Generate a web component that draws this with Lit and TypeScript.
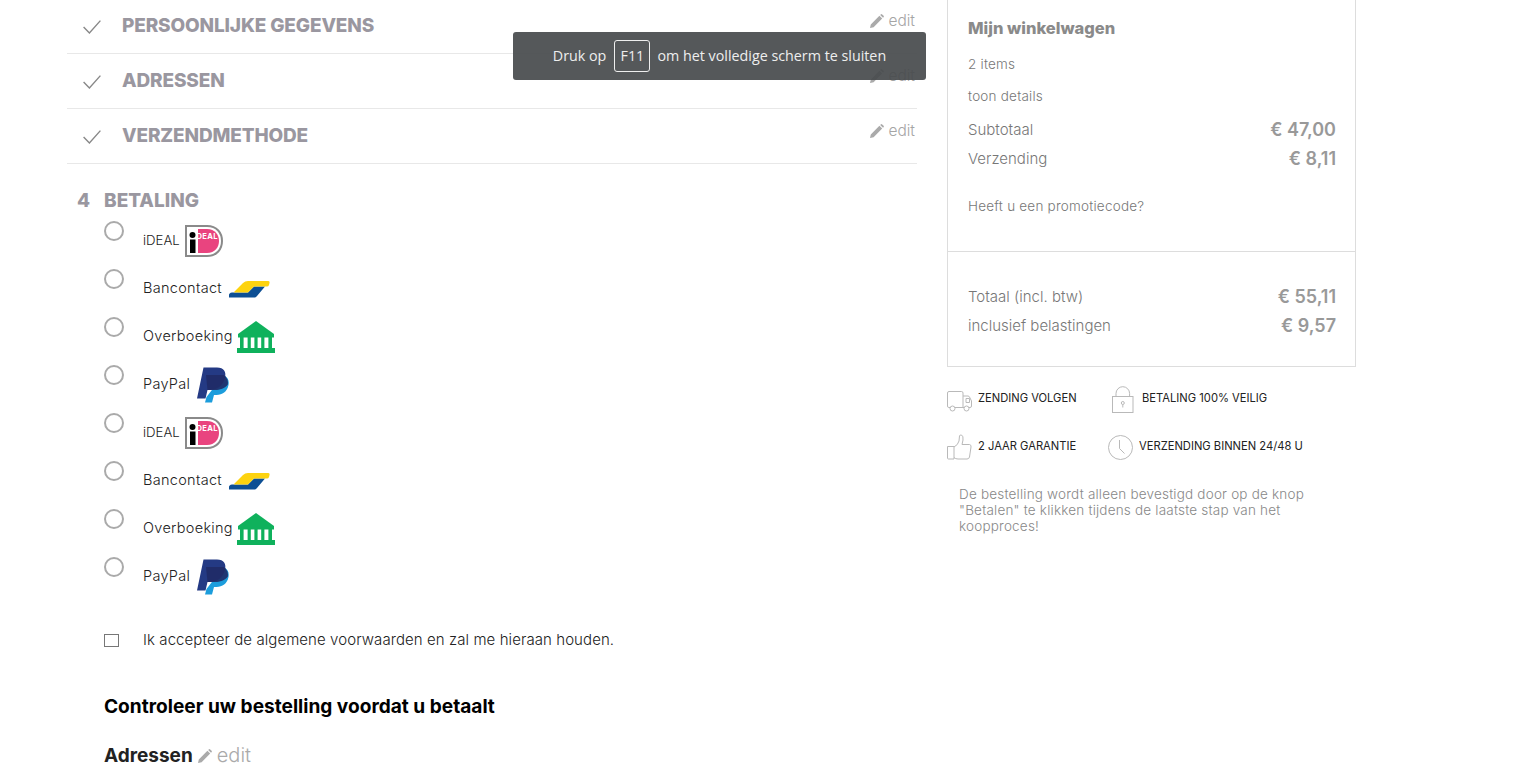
import { LitElement, html, css } from "lit";
import { customElement } from "lit/decorators.js";

const pencil = html`<svg class="pencil" viewBox="0 0 14 14"><path d="M0 14 L0.8 10.4 L9.4 1.8 L12.2 4.6 L3.6 13.2 Z M10.2 1 L11 .3 Q11.6 -.1 12.2 .4 L13.6 1.8 Q14.1 2.4 13.7 3 L13 3.8 Z" fill="#aaa"/></svg>`;
const check = html`<svg class="check" viewBox="0 0 18 14"><path d="M.6 7 L6.4 13 L17.4 .6" fill="none" stroke="#888" stroke-width="1.4"/></svg>`;

const ideal = html`<svg class="logo" width="38" height="32" viewBox="0 0 38 32">
  <path d="M1 1 H22 C32 1 37 8 37 16 C37 24 32 31 22 31 H1 Z" fill="#fff" stroke="#8a8a8a" stroke-width="2"/>
  <path d="M13 4 H22 C30 4 34 10 34 16 C34 22 30 28 22 28 H13 Z" fill="#e9447f"/>
  <circle cx="7.5" cy="10" r="3" fill="#000"/><rect x="5" y="14.5" width="5.5" height="13.5" fill="#000"/>
  <text x="11.5" y="14" font-family="Inter, sans-serif" font-size="7.6" font-weight="700" fill="#fff">DEAL</text>
</svg>`;
const bancontact = html`<svg class="logo" width="41" height="18" viewBox="0 0 41 18">
  <path d="M0 17.5 H25 Q27 17.5 28 16 L36 6.5 H25 L19 12.5 H3 Q0 13 0 15 Z" fill="#0d4f94"/>
  <path d="M5 12 L14 3 Q16 1 19 1 H39 Q41 1 40.5 3 L40 5 Q39.5 6.5 38 6.5 H25 L19 12.5 H5 Z" fill="#fdd30f"/>
</svg>`;
const bank = html`<svg class="logo" width="38" height="32" viewBox="0 0 38 32">
  <path d="M19 0 L37 13 V16.5 H1 V13 Z" fill="#0fb15c"/>
  <g fill="#0fb15c"><rect x="3" y="16" width="3.6" height="11"/><rect x="10.6" y="16" width="3.2" height="11"/><rect x="17.4" y="16" width="3.2" height="11"/><rect x="24.2" y="16" width="3.2" height="11"/><rect x="31.4" y="16" width="3.6" height="11"/><rect x="0" y="27" width="38" height="5"/></g>
</svg>`;
const paypal = html`<svg class="logo" width="32" height="36" viewBox="0 0 32 36">
  <path d="M26.5 8 C31 10 32.5 14 31.4 18.5 C30 24.5 25.5 28 19.5 28 H17 L15 35.5 H8 L9.5 30 Z" fill="#1c9ddc"/>
  <path d="M6.5 .5 H20 C27 .5 29.5 5 28 11 C26 19 20 23 13 23 H10.5 L8.5 31.5 H0 Z" fill="#243a84"/>
  <path d="M9 8 H26.5 C30 10 31.5 14 30.8 17.5 C28 21.5 23 23 18 23 H10.5 Z" fill="#202b66" opacity=".9"/>
</svg>`;

const truck = html`<svg class="ti truck" width="25" height="21" viewBox="0 0 25 21" fill="none" stroke="#b9b9b9" stroke-width="1"><path d="M3.2 16.5 H1.8 Q.5 16.5 .5 15 V2 Q.5.5 2 .5 H14.5 Q16 .5 16 2 V16.5 H7.8 M16 5 H21 Q22 5 22.5 6 L24.5 10 V15 Q24.5 16.5 23 16.5 H21.8 M16 16.5 H17.2 M19 7.5 H22.5 V11.5 H19 Z"/><circle cx="5.5" cy="17.5" r="2.5"/><circle cx="19.5" cy="17.5" r="2.5"/></svg>`;
const lock = html`<svg class="ti low" width="22" height="27" viewBox="0 0 22 27" fill="none" stroke="#b9b9b9" stroke-width="1"><rect x=".5" y="10.5" width="20.5" height="16"/><path d="M4 10.5 V7.5 A6.8 6.8 0 0 1 17.6 7.5 V10.5"/><circle cx="10.8" cy="17" r="1.5"/><path d="M10.8 18.5 V21.5"/></svg>`;
const thumb = html`<svg class="ti" width="25" height="26" viewBox="0 0 25 26" fill="none" stroke="#b9b9b9" stroke-width="1"><path d="M.5 12.5 H7 V25 H1.5 Q.5 25 .5 24 Z M7 13 Q11 11 12 7 L12.5 2 Q13 .5 14.5 1 Q16.5 2 16 6 L15 10.5 H22.5 Q24.5 11 24 13 L22.5 23 Q22 25 20 25 H11 Q8.5 25 7 23.5"/></svg>`;
const clock = html`<svg class="ti low" width="25" height="25" viewBox="0 0 25 25" fill="none" stroke="#b9b9b9" stroke-width="1"><circle cx="12.5" cy="12.5" r="12"/><path d="M11.5 5 V13.5 L16.5 18.5"/></svg>`;

const base = [
  { name: "iDEAL", logo: ideal, w: 42, cls: "tight" },
  { name: "Bancontact", logo: bancontact, w: 86, cls: "" },
  { name: "Overboeking", logo: bank, w: 94, cls: "" },
  { name: "PayPal", logo: paypal, w: 54, cls: "" },
];
const methods = [...base, ...base];

@customElement("app-root")
export class AppRoot extends LitElement {
  static styles = css`
    :host { display: block; height: 777px; overflow: hidden; position: relative; background: #fff; font-family: Inter, "Liberation Sans", sans-serif; color: #222; }
    .page { display: flex; gap: 30px; padding-left: 67px; margin-top: -1px; align-items: flex-start; }
    .main { width: 850px; flex: none; }
    .step { height: 54px; border-bottom: 1px solid #e8e8e8; display: flex; align-items: center; padding-left: 16px; }
    .check { width: 18px; height: 14px; margin-right: 21px; margin-top: 2px; }
    .step h2 { margin: 0 0 2px; font-size: 19px; font-weight: 800; color: #9a97a0; flex: 1; letter-spacing: -.15px; }
    .edit { display: flex; align-items: center; gap: 4px; font-size: 15.5px; font-weight: 300; color: #a5a5a5; margin: -11px 2px 0 0; }
    .pencil { width: 14px; height: 14px; }
    .pay-head { display: flex; align-items: center; height: 24px; margin-top: 24px; font-size: 19px; font-weight: 800; color: #9a97a0; padding-left: 10px; }
    .pay-head b { width: 27px; font-weight: 800; }
    .methods { margin-top: 3px; padding-left: 37px; }
    .method { height: 48px; display: flex; align-items: flex-start; }
    .radio { width: 20px; height: 20px; border: 2px solid #aaa; border-radius: 50%; box-sizing: border-box; margin: 6px 19px 0 0; flex: none; }
    .lbl { display: flex; align-items: center; height: 32px; margin-top: 10px; font-size: 14.5px; font-weight: 300; letter-spacing: .3px; color: #222; }
    .lbl span { flex: none; padding-bottom: 3px; }
    .lbl span.tight { font-size: 13.2px; letter-spacing: 0; }
    .terms { display: flex; align-items: center; margin: 30px 0 0 37px; font-size: 15px; letter-spacing: .08px; font-weight: 300; color: #222; height: 20px; }
    .box { height: 11px; width: 13px; border: 1px solid #777; margin-right: 24px; margin-top: 2px; }
    h3 { margin: 45px 0 0 37px; font-size: 19.1px; font-weight: 700; color: #000; line-height: 24px; }
    .addr { display: flex; align-items: center; margin: 25px 0 0 37px; height: 24px; font-size: 19px; font-weight: 700; color: #222; }
    .addr .pencil { margin: 2px 5px 0 5px; }
    .addr span { font-size: 20px; font-weight: 300; color: #aaa; }
    aside { width: 409px; flex: none; }
    .card { border: 1px solid #ddd; margin-top: -20px; color: #888; }
    .top { padding: 36px 19px 0 20px; height: 272px; box-sizing: border-box; border-bottom: 1px solid #ddd; }
    .card h4 { margin: 0; font-size: 16.5px; font-weight: 800; color: #8a8a8a; line-height: 24px; }
    .sm { font-size: 13.5px; letter-spacing: .22px; font-weight: 300; line-height: 20px; color: #777; }
    .row { display: flex; justify-content: space-between; align-items: center; height: 29px; font-size: 15px; font-weight: 300; color: #777; }
    .row b { font-size: 18px; font-weight: 600; color: #999; }
    .bot { padding: 30px 19px 26px 20px; }
    .badges { display: grid; grid-template-columns: 161px 1fr; row-gap: 21px; margin-top: 18px; font-size: 11.2px; font-weight: 400; color: #222; }
    .badge { display: flex; align-items: center; gap: 6px; height: 27px; }
    .badge span { padding-bottom: 2px; }
    .badge.r { gap: 8px; padding-left: 4px; }
    .truck { margin-top: 5px; }
    .low { margin-top: 2px; }
    .note { margin: 26px 40px 0 12px; font-size: 13.5px; letter-spacing: .2px; line-height: 16px; font-weight: 300; color: #888; }
    .toast { position: absolute; left: 513px; top: 32px; width: 413px; height: 48px; border-radius: 3px; background: rgba(72,75,78,.93); color: #eee; display: flex; align-items: center; justify-content: center; font-family: "Open Sans", sans-serif; font-size: 14.3px; box-sizing: border-box; padding-bottom: 2px; }
    kbd { font: inherit; border: 1px solid #eee; border-radius: 3px; width: 36px; height: 32px; box-sizing: border-box; display: flex; align-items: center; justify-content: center; margin: 2px 7px 0 8px; padding-bottom: 1px; }
  `;

  render() {
    return html`
      <div class="page">
        <div class="main">
          ${["PERSOONLIJKE GEGEVENS", "ADRESSEN", "VERZENDMETHODE"].map(
            (t) => html`<div class="step">${check}<h2>${t}</h2><div class="edit">${pencil}edit</div></div>`
          )}
          <div class="pay-head"><b>4</b>BETALING</div>
          <div class="methods">
            ${methods.map((m) => html`<div class="method"><div class="radio"></div><div class="lbl"><span class=${m.cls} style="width:${m.w}px">${m.name}</span>${m.logo}</div></div>`)}
          </div>
          <div class="terms"><div class="box"></div>Ik accepteer de algemene voorwaarden en zal me hieraan houden.</div>
          <h3>Controleer uw bestelling voordat u betaalt</h3>
          <div class="addr">Adressen${pencil}<span>edit</span></div>
        </div>
        <aside>
          <div class="card">
            <div class="top">
              <h4>Mijn winkelwagen</h4>
              <div class="sm" style="margin-top:14px">2 items</div>
              <div class="sm" style="margin-top:12px">toon details</div>
              <div class="row" style="margin-top:9px"><span>Subtotaal</span><b>€ 47,00</b></div>
              <div class="row"><span>Verzending</span><b>€ 8,11</b></div>
              <div class="sm" style="margin-top:23px">Heeft u een promotiecode?</div>
            </div>
            <div class="bot">
              <div class="row"><span>Totaal (incl. btw)</span><b>€ 55,11</b></div>
              <div class="row"><span>inclusief belastingen</span><b>€ 9,57</b></div>
            </div>
          </div>
          <div class="badges">
            <div class="badge">${truck}<span>ZENDING VOLGEN</span></div>
            <div class="badge r">${lock}<span>BETALING 100% VEILIG</span></div>
            <div class="badge">${thumb}<span>2 JAAR GARANTIE</span></div>
            <div class="badge">${clock}<span>VERZENDING BINNEN 24/48 U</span></div>
          </div>
          <p class="note">De bestelling wordt alleen bevestigd door op de knop "Betalen" te klikken tijdens de laatste stap van het koopproces!</p>
        </aside>
      </div>
      <div class="toast">Druk op <kbd>F11</kbd> om het volledige scherm te sluiten</div>
    `;
  }
}
